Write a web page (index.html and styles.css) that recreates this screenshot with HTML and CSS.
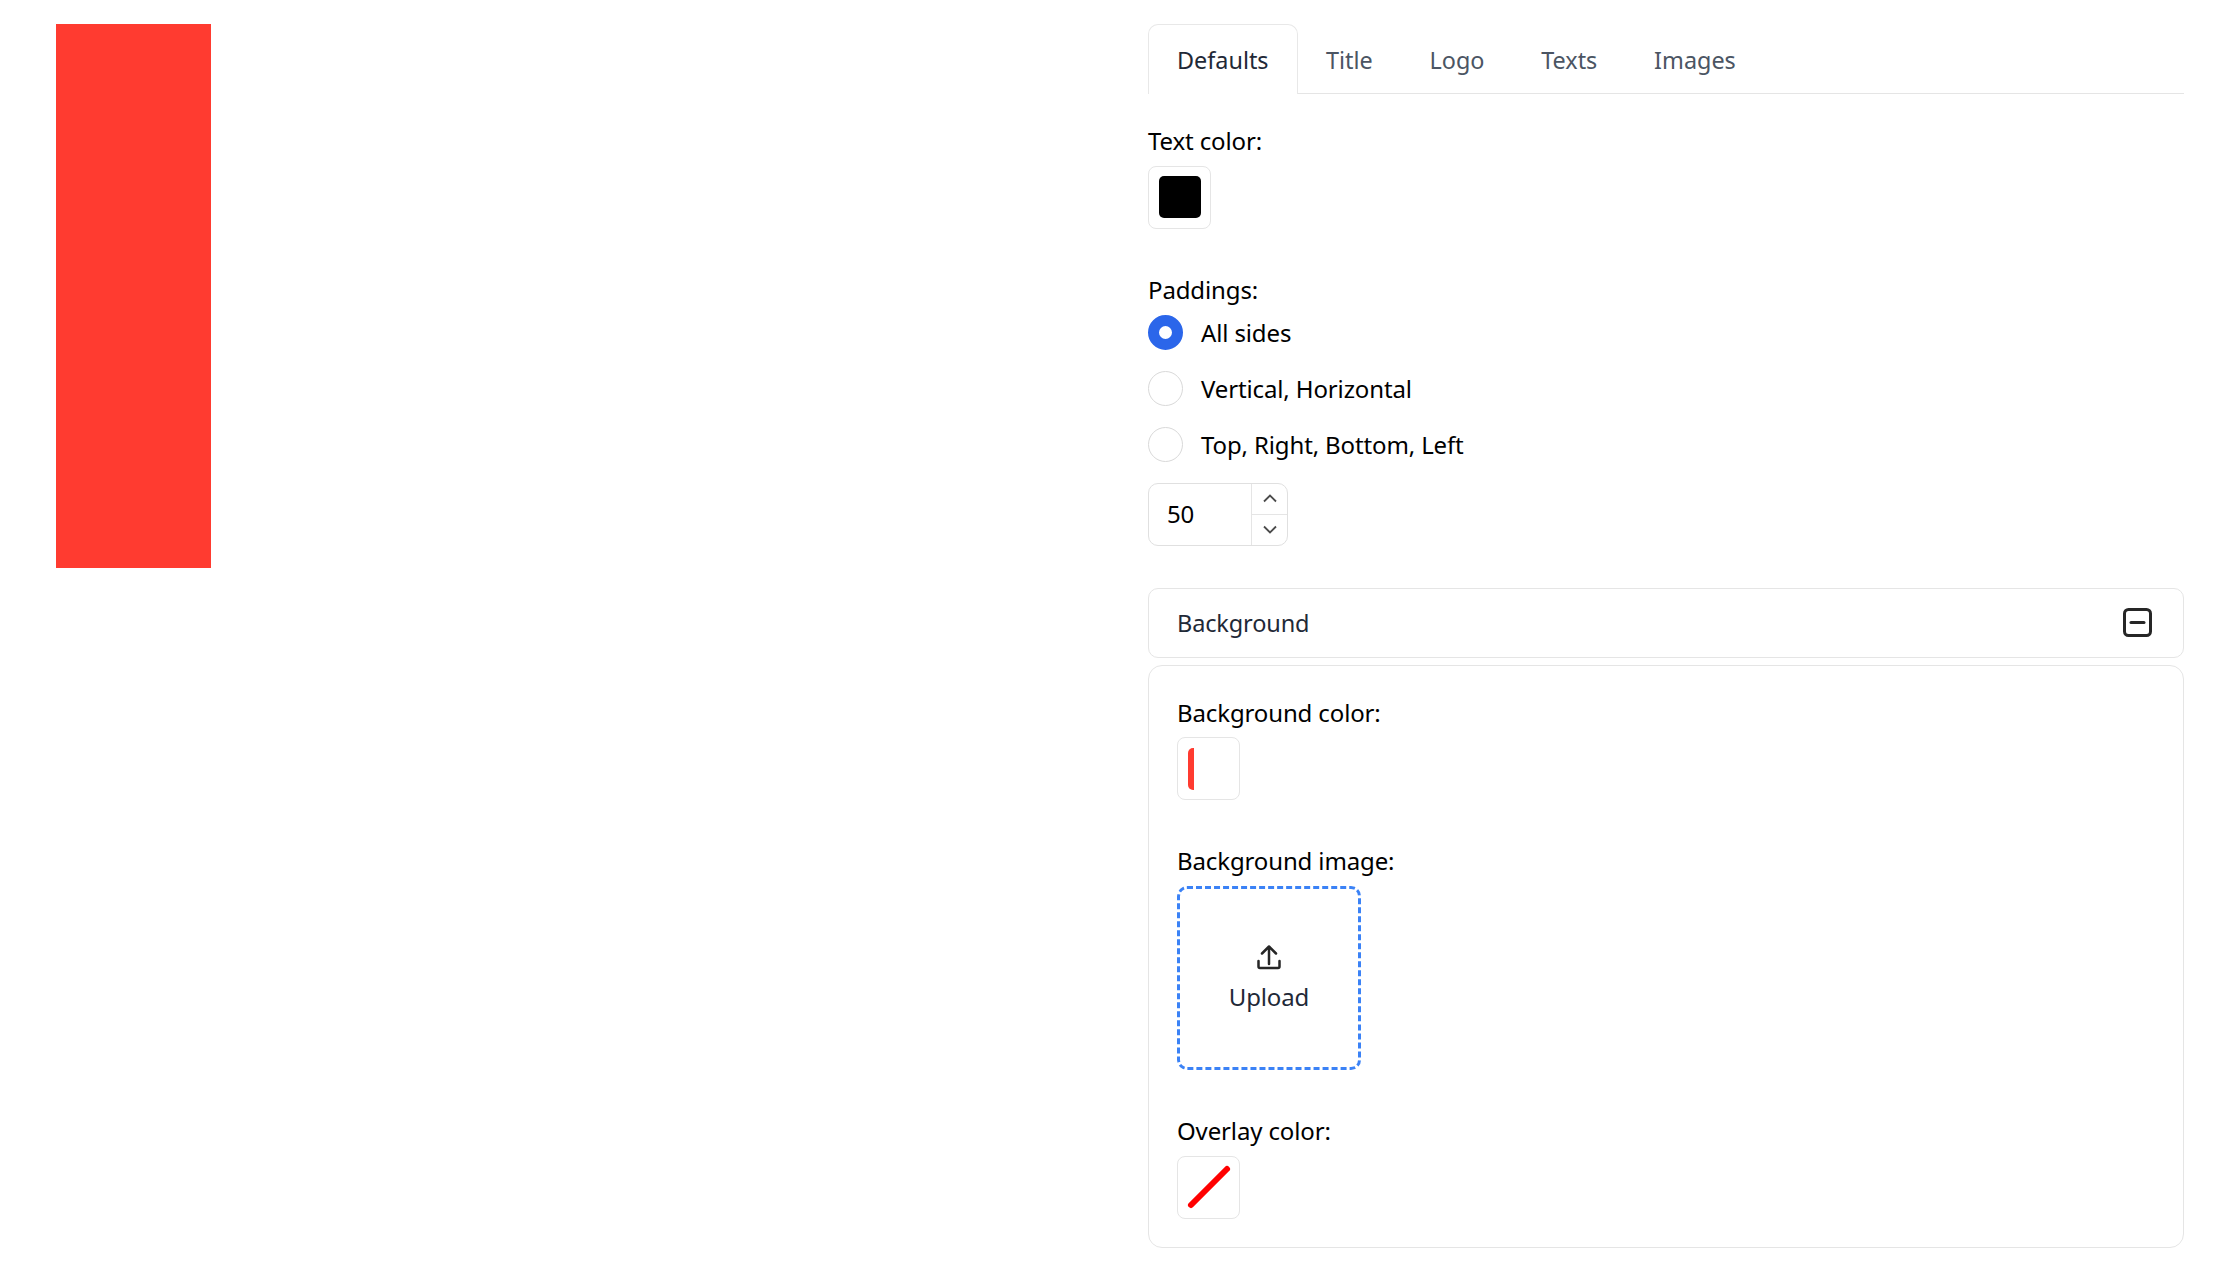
FILE: index.html
```html
<!DOCTYPE html>
<html lang="en">
<head>
<meta charset="utf-8">
<title>Editor</title>
<link rel="stylesheet" href="styles.css">
</head>
<body>
<main class="page">
  <section class="preview"><div class="canvas"></div></section>
  <section class="editor">
    <nav class="tabs">
      <button class="tab tab-active">Defaults</button>
      <button class="tab">Title</button>
      <button class="tab">Logo</button>
      <button class="tab">Texts</button>
      <button class="tab">Images</button>
    </nav>
    <div class="field field-first">
      <div class="label label-wide">Text color:</div>
      <div class="swatch"><span class="fill fill-black"></span></div>
    </div>
    <div class="field">
      <div class="label label-wide">Paddings:</div>
      <div class="radios">
        <label class="radio-row"><input class="radio" type="radio" name="p" checked><span>All sides</span></label>
        <label class="radio-row"><input class="radio" type="radio" name="p"><span>Vertical, Horizontal</span></label>
        <label class="radio-row"><input class="radio" type="radio" name="p"><span>Top, Right, Bottom, Left</span></label>
      </div>
      <div class="number">
        <span class="number-value">50</span>
        <div class="stepper">
          <span class="step step-up"><svg width="14" height="9" viewBox="0 0 14 9"><path d="M1 7.500 7 1.500l6 6" /></svg></span>
          <span class="step"><svg width="14" height="9" viewBox="0 0 14 9"><path d="M1 1.500 7 7.500l6-6" /></svg></span>
        </div>
      </div>
    </div>
    <div class="collapse-head">
      <span>Background</span>
      <svg class="collapse-icon" width="29" height="29" viewBox="0 0 29 29"><rect x="1.500" y="1.500" width="26" height="26" rx="4"/><path d="M8 14.500h13"/></svg>
    </div>
    <div class="panel">
      <div class="field field-first">
        <div class="label">Background color:</div>
        <div class="swatch"><span class="fill fill-red"></span></div>
      </div>
      <div class="field">
        <div class="label label-wide">Background image:</div>
        <div class="upload">
          <svg class="upload-icon" width="26" height="26" viewBox="0 0 26 26"><path d="M13 20V3M6 9.500 13 2.500l7 7M2.500 17v5.500a1.500 1.500 0 0 0 1.500 1.500h18a1.500 1.500 0 0 0 1.500-1.500V17"/></svg>
          <span>Upload</span>
        </div>
      </div>
      <div class="field field-overlay">
        <div class="label label-wide">Overlay color:</div>
        <div class="swatch"><svg width="61" height="61" viewBox="0 0 61 61"><path class="none-line" d="M13 48 49 12"/></svg></div>
      </div>
    </div>
  </section>
</main>
</body>
</html>
```
FILE: styles.css
```css
* { box-sizing: border-box; }
html, body { margin: 0; background: #fff; }
body { font-family: "Noto Sans", "Open Sans", sans-serif; font-size: 24px; letter-spacing: -0.13px; color: #000; }
.page { display: grid; grid-template-columns: 1148px 1036px; height: 1280px; overflow: hidden; }
.preview { padding: 24px 0 0 56px; }
.canvas { width: 155px; height: 544px; background: #ff3b30; }
.editor { padding-top: 24px; min-width: 0; }
.tabs { display: flex; height: 70px; border-bottom: 1px solid #e5e5e5; }
.tab { height: 70px; padding: 0 27.400px; border: 1px solid transparent; border-bottom: 0; border-radius: 10px 10px 0 0; background: none; font: inherit; font-size: 23.400px; color: #4b5563; }
.tab-active { padding: 0 28px; border-color: #e8e8e8; background: #fff; color: #1f2937; position: relative; }
.field { margin-top: 44px; }
.field-first { margin-top: 30px; }
.field-overlay { margin-top: 44px; }
.label { height: 34px; line-height: 34px; margin-bottom: 7px; }
.label-wide { margin-bottom: 8px; }
.swatch { width: 63px; height: 63px; border: 1px solid #e5e5e5; border-radius: 8px; padding: 9px 10px; background: #fff; }
.swatch svg { display: block; margin: -9px -10px; }
.fill { display: block; height: 42px; border-radius: 5px; }
.fill-black { width: 42px; background: #000; }
.fill-red { width: 6px; margin-top: 1px; background: #ff3b30; border-radius: 5px 0 0 5px; }
.none-line { stroke: #ff0000; stroke-width: 6; stroke-linecap: round; fill: none; }
.radios { display: flex; flex-direction: column; gap: 21px; }
.radio-row { display: flex; align-items: center; gap: 18px; height: 35px; }
.radio { appearance: none; width: 35px; height: 35px; margin: 0; border: 1px solid #d9d9d9; border-radius: 50%; background: #fff; }
.radio:checked { border: 11px solid #2b66ea; }
.number { display: flex; width: 140px; height: 63px; margin-top: 21px; border: 1px solid #e0e0e0; border-radius: 10px; }
.number-value { flex: 1; padding-left: 18px; line-height: 60px; }
.stepper { display: flex; flex-direction: column; width: 36px; border-left: 1px solid #e5e5e5; }
.step { flex: 1; display: flex; align-items: center; justify-content: center; padding-bottom: 2px; }
.step-up { border-bottom: 1px solid #e5e5e5; }
.step svg path { fill: none; stroke: #4b4b4b; stroke-width: 1.800; }
.collapse-head { display: flex; align-items: center; justify-content: space-between; height: 70px; margin-top: 42px; padding: 0 31px 1px 28px; border: 1px solid #e5e5e5; border-radius: 10px; font-size: 23.500px; color: #1f2937; }
.collapse-icon rect, .collapse-icon path { fill: none; stroke: #262626; stroke-width: 3; }
.collapse-icon path { stroke-linecap: round; }
.panel { margin-top: 7px; height: 583px; padding: 0 28px; border: 1px solid #e5e5e5; border-radius: 14px; }
.upload { display: flex; flex-direction: column; align-items: center; justify-content: center; gap: 10px; width: 184px; height: 184px; border: 3px dashed #3b82f6; border-radius: 10px; color: #1f2937; }
.upload-icon { fill: none; stroke: #262626; stroke-width: 2.500; stroke-linecap: round; stroke-linejoin: round; }
```
